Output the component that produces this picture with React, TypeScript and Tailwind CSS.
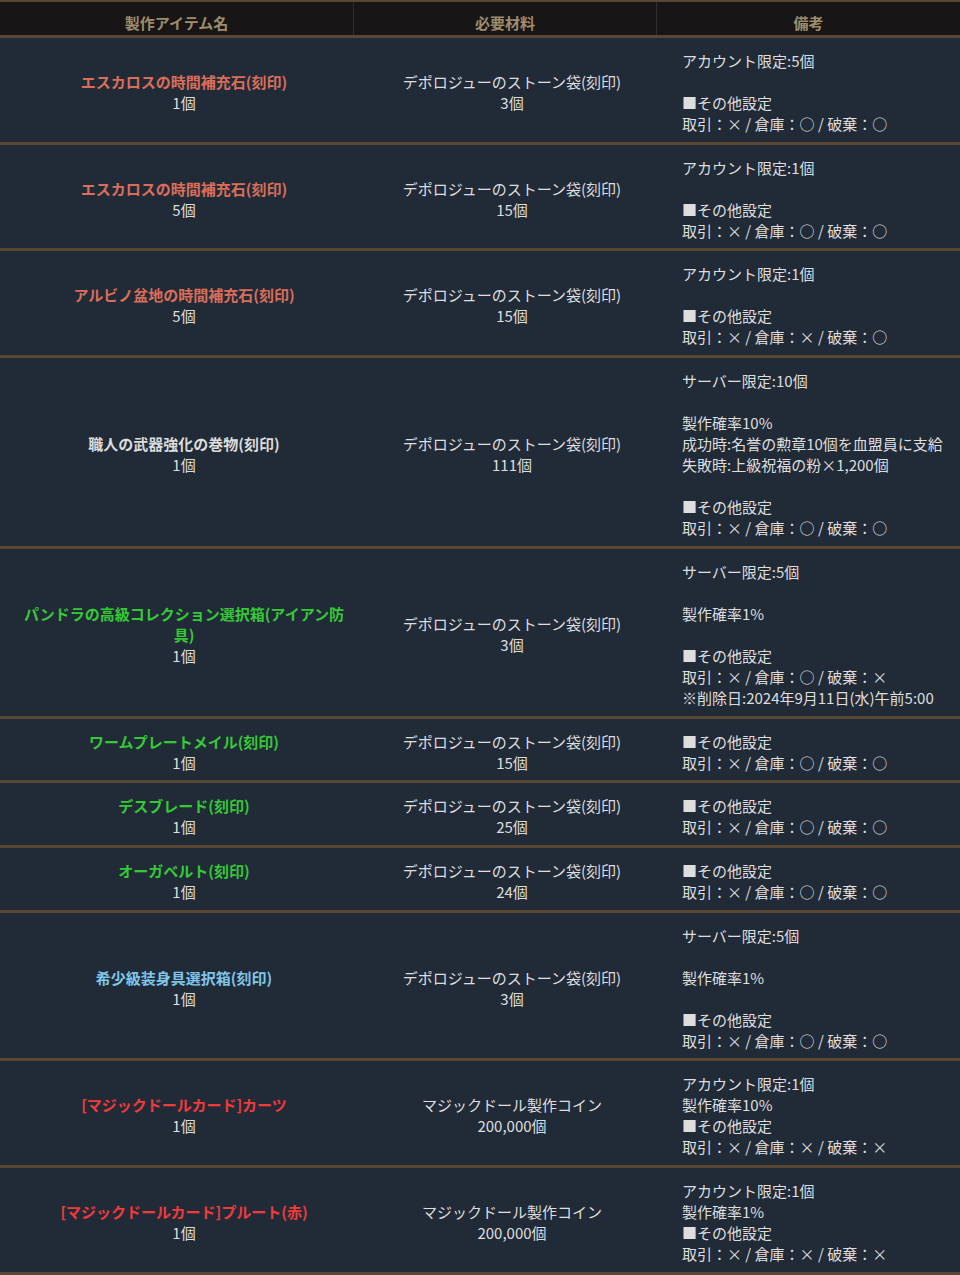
type Row = {
  name: string;
  color: string;
  qty: string;
  material: string;
  need: string;
  notes: string[];
};

const TRADE_OOO = "取引：× / 倉庫：○ / 破棄：○";

const rows: Row[] = [
  {
    name: "エスカロスの時間補充石(刻印)",
    color: "text-[#dc6e59]",
    qty: "1個",
    material: "デポロジューのストーン袋(刻印)",
    need: "3個",
    notes: ["アカウント限定:5個", "", "■その他設定", TRADE_OOO],
  },
  {
    name: "エスカロスの時間補充石(刻印)",
    color: "text-[#dc6e59]",
    qty: "5個",
    material: "デポロジューのストーン袋(刻印)",
    need: "15個",
    notes: ["アカウント限定:1個", "", "■その他設定", TRADE_OOO],
  },
  {
    name: "アルビノ盆地の時間補充石(刻印)",
    color: "text-[#dc6e59]",
    qty: "5個",
    material: "デポロジューのストーン袋(刻印)",
    need: "15個",
    notes: ["アカウント限定:1個", "", "■その他設定", "取引：× / 倉庫：× / 破棄：○"],
  },
  {
    name: "職人の武器強化の巻物(刻印)",
    color: "text-[#dcdcdc]",
    qty: "1個",
    material: "デポロジューのストーン袋(刻印)",
    need: "111個",
    notes: [
      "サーバー限定:10個",
      "",
      "製作確率10%",
      "成功時:名誉の勲章10個を血盟員に支給",
      "失敗時:上級祝福の粉×1,200個",
      "",
      "■その他設定",
      TRADE_OOO,
    ],
  },
  {
    name: "パンドラの高級コレクション選択箱(アイアン防具)",
    color: "text-[#36c936]",
    qty: "1個",
    material: "デポロジューのストーン袋(刻印)",
    need: "3個",
    notes: [
      "サーバー限定:5個",
      "",
      "製作確率1%",
      "",
      "■その他設定",
      "取引：× / 倉庫：○ / 破棄：×",
      "※削除日:2024年9月11日(水)午前5:00",
    ],
  },
  {
    name: "ワームプレートメイル(刻印)",
    color: "text-[#36c936]",
    qty: "1個",
    material: "デポロジューのストーン袋(刻印)",
    need: "15個",
    notes: ["■その他設定", TRADE_OOO],
  },
  {
    name: "デスブレード(刻印)",
    color: "text-[#36c936]",
    qty: "1個",
    material: "デポロジューのストーン袋(刻印)",
    need: "25個",
    notes: ["■その他設定", TRADE_OOO],
  },
  {
    name: "オーガベルト(刻印)",
    color: "text-[#36c936]",
    qty: "1個",
    material: "デポロジューのストーン袋(刻印)",
    need: "24個",
    notes: ["■その他設定", TRADE_OOO],
  },
  {
    name: "希少級装身具選択箱(刻印)",
    color: "text-[#7fc6e8]",
    qty: "1個",
    material: "デポロジューのストーン袋(刻印)",
    need: "3個",
    notes: ["サーバー限定:5個", "", "製作確率1%", "", "■その他設定", TRADE_OOO],
  },
  {
    name: "[マジックドールカード]カーツ",
    color: "text-[#f23a3a]",
    qty: "1個",
    material: "マジックドール製作コイン",
    need: "200,000個",
    notes: ["アカウント限定:1個", "製作確率10%", "■その他設定", "取引：× / 倉庫：× / 破棄：×"],
  },
  {
    name: "[マジックドールカード]プルート(赤)",
    color: "text-[#f23a3a]",
    qty: "1個",
    material: "マジックドール製作コイン",
    need: "200,000個",
    notes: ["アカウント限定:1個", "製作確率1%", "■その他設定", "取引：× / 倉庫：× / 破棄：×"],
  },
];

export default function App() {
  return (
    <div className="w-[960px] bg-[#212b38] text-[15px] leading-[21px] text-[#dedede] [font-family:'Noto_Sans_CJK_JP','Noto_Sans',sans-serif]">
      {/* header */}
      <div className="grid grid-cols-[353px_303px_304px] bg-[#171516] border-t-2 border-b-[3px] border-[#5a4733] font-bold text-[#9e8c6a]">
        <div className="pt-[10px] pb-[2px] text-center">製作アイテム名</div>
        <div className="pt-[10px] pb-[2px] text-center border-l border-[#2c2e33]">必要材料</div>
        <div className="pt-[10px] pb-[2px] text-center border-l border-[#2c2e33]">備考</div>
      </div>

      {rows.map((r, i) => (
        <div key={i} className="grid grid-cols-[353px_303px_304px] border-b-[3px] border-[#5a4733]">
          <div className="flex flex-col items-center justify-center text-center pl-[20px] pr-[5px] pt-[12px] pb-[7.73px]">
            <span className={`font-bold ${r.color}`}>{r.name}</span>
            <span>{r.qty}</span>
          </div>
          <div className="flex flex-col items-center justify-center text-center pl-[20px] pr-[5px] pt-[12px] pb-[7.73px]">
            <span>{r.material}</span>
            <span>{r.need}</span>
          </div>
          <div className="flex flex-col justify-center pl-[26px] pr-[4px] pt-[12px] pb-[7.73px]">
            {r.notes.map((n, j) => (
              <div key={j} className="h-[21px] whitespace-nowrap">
                {n}
              </div>
            ))}
          </div>
        </div>
      ))}
    </div>
  );
}
